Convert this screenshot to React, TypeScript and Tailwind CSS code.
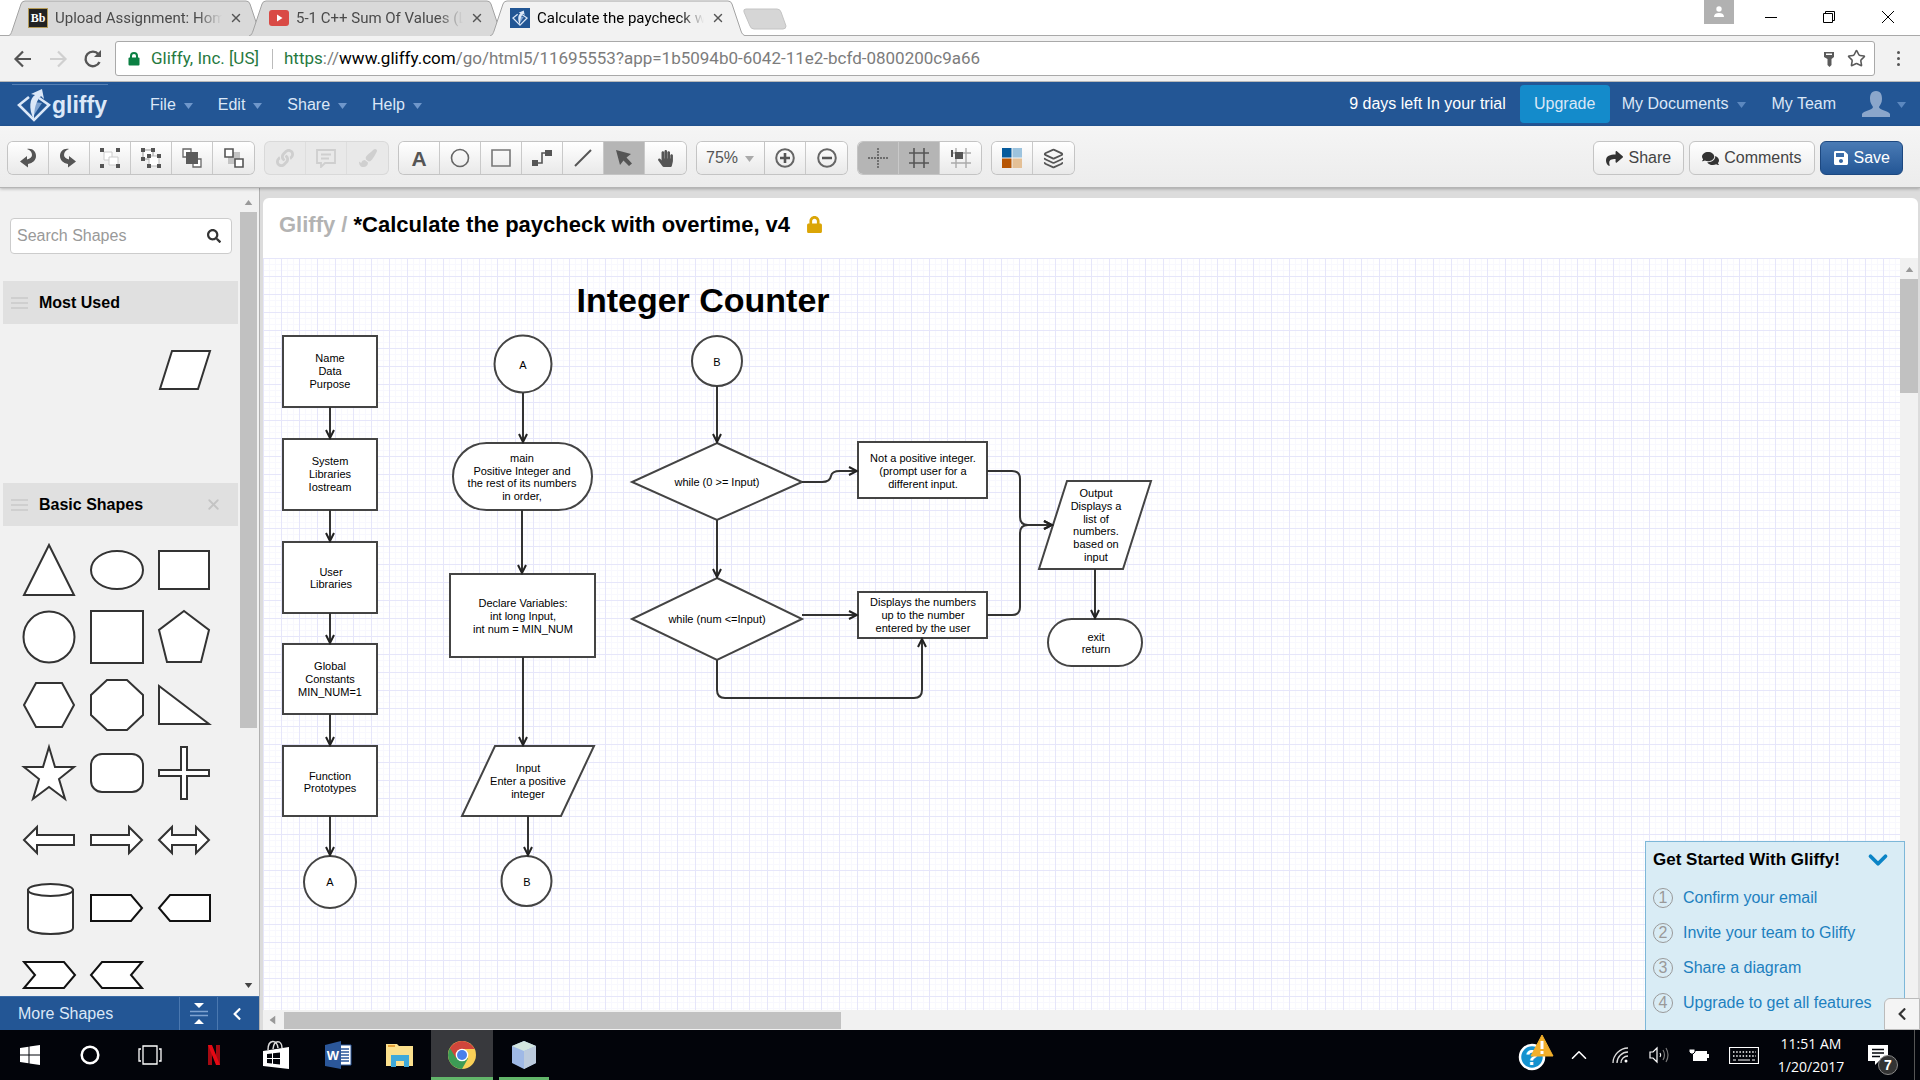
import type { ReactNode } from "react";
import {
  FaComments,
  FaHandPaper,
  FaLink,
  FaLock,
  FaPaintBrush,
  FaSave,
  FaSearch,
  FaShare,
  FaChevronLeft,
} from "react-icons/fa";
import { ChevronDown, ChevronUp, Layers, Star, X } from "lucide-react";

/* ---------- browser chrome ---------- */

function GliffyMark({ className }: { className: string }) {
  return (
    <svg viewBox="0 0 34 34" className={className} aria-hidden="true">
      <path d="M12 9 L2 17 L17 32 L32 17 L22 10" fill="none" stroke="#dce8f8" strokeWidth="2.6" />
      <path d="M17 14 L25 15 L17 27 Z" fill="#7fa3d1" />
      <path d="M17 32 C11 20 13 10 18 7 L14 6 L25 1 L27 11 L24 8 C19 13 17 20 17 32Z" fill="#dce8f8" />
    </svg>
  );
}

function Tab({ title, active, icon }: { title: string; active?: boolean; icon: ReactNode }) {
  return (
    <div className={active ? "relative z-10 h-9 w-64 -ml-[15px]" : "relative h-9 w-64 -ml-[15px]"}>
      <svg viewBox="0 0 256 36" className="absolute inset-0 h-full w-full" aria-hidden="true">
        <path
          d="M0 36 C3 35 3 33 4 31 L13 4 Q14 1 17 1 L238 1 Q241 1 242 4 L251 31 C252 34 253 35 256 36"
          fill={active ? "#f2f2f2" : "#d9d9d9"}
          stroke="#a3a3a3"
        />
      </svg>
      <div className="relative flex h-9 items-center gap-[7px] pl-5 pr-[21px]">
        <span className="h-5 w-5 shrink-0">{icon}</span>
        <span
          className={
            active
              ? "w-0 flex-1 overflow-hidden whitespace-nowrap text-[15px] text-black mask-r-from-85%"
              : "w-0 flex-1 overflow-hidden whitespace-nowrap text-[15px] text-[#4a4a4a] mask-r-from-85%"
          }
        >
          {title}
        </span>
        <button aria-label={`Close ${title}`} className="text-[#555]">
          <X size={14} strokeWidth={2.4} />
        </button>
      </div>
    </div>
  );
}

function BrowserBar() {
  return (
    <header className="shrink-0 font-[Roboto,sans-serif]">
      <div className="flex h-9 items-stretch border-b border-[#a9a9a9] bg-white pl-[23px]">
        <Tab
          title="Upload Assignment: Homework"
          icon={
            <span className="flex h-5 w-5 items-center justify-center border border-[#b49a55] bg-[#222] font-['Liberation_Serif',serif] text-xs font-bold text-white">
              Bb
            </span>
          }
        />
        <Tab
          title="5-1 C++ Sum Of Values (Loops)"
          icon={
            <svg viewBox="0 0 20 20" className="h-5 w-5" aria-hidden="true">
              <rect y="2" width="20" height="16" rx="3" fill="#d94a45" />
              <path d="M8 6.5 L13.5 10 L8 13.5Z" fill="#fff" />
            </svg>
          }
        />
        <Tab
          active
          title="Calculate the paycheck with overtime"
          icon={
            <span className="flex h-5 w-5 items-center justify-center bg-[#225694]">
              <GliffyMark className="h-4 w-4" />
            </span>
          }
        />
        <button aria-label="New tab" className="-ml-[3px] mt-2 h-[22px] w-[44px]">
          <svg viewBox="0 0 44 22" aria-hidden="true">
            <path d="M3 1 H34 Q37 1 38 4 L43 18 Q43 21 40 21 H11 Q8 21 7 18 L1 4 Q0 1 3 1Z" fill="#d6d6d6" stroke="#c4c4c4" />
          </svg>
        </button>
        <div className="ml-auto mr-[2px] flex items-start text-black">
          <button aria-label="Profile" className="flex h-6 w-[30px] items-center justify-center bg-[#b1b1b1]">
            <svg viewBox="0 0 12 12" className="h-3 w-3" aria-hidden="true" fill="#fff">
              <circle cx="6" cy="3" r="2.7" />
              <path d="M1 11 Q1 7 6 7 Q11 7 11 11Z" />
            </svg>
          </button>
          <button aria-label="Minimize" className="ml-2 flex h-[34px] w-[58px] items-center justify-center">
            <span className="block h-px w-3 bg-black" />
          </button>
          <button aria-label="Restore" className="flex h-[34px] w-[58px] items-center justify-center">
            <svg viewBox="0 0 12 12" className="h-3 w-3" fill="none" stroke="#000" aria-hidden="true">
              <path d="M.5 2.500 H9.500 V11.500 H.5Z M2.500 2.500 V.5 H11.500 V9.500 H9.500" />
            </svg>
          </button>
          <button aria-label="Close window" className="flex h-[34px] w-[60px] items-center justify-center">
            <svg viewBox="0 0 12 12" className="h-3 w-3" stroke="#000" aria-hidden="true">
              <path d="M0 0 L12 12 M12 0 L0 12" />
            </svg>
          </button>
        </div>
      </div>
      <div className="flex h-[46px] items-center border-b border-[#b9b9b9] bg-[#f2f2f2]">
        <button aria-label="Back" className="ml-[13px] w-[22px]">
          <svg viewBox="0 0 20 20" className="h-5 w-5" fill="none" stroke="#555" strokeWidth="2.2" aria-hidden="true">
            <path d="M18 10 H3 M10 2.500 L2.500 10 L10 17.500" />
          </svg>
        </button>
        <button aria-label="Forward" className="ml-[13px] w-[22px]">
          <svg viewBox="0 0 20 20" className="h-5 w-5" fill="none" stroke="#d0d0d0" strokeWidth="2.2" aria-hidden="true">
            <path d="M2 10 H17 M10 2.500 L17.500 10 L10 17.500" />
          </svg>
        </button>
        <button aria-label="Reload" className="ml-[13px] w-[22px]">
          <svg viewBox="0 0 20 20" className="h-5 w-5" fill="none" stroke="#555" strokeWidth="2.4" aria-hidden="true">
            <path d="M16.500 13 A7.300 7.300 0 1 1 15.500 5.300" />
            <path d="M18 1 V8 H11Z" fill="#555" stroke="none" />
          </svg>
        </button>
        <div className="ml-[10px] mr-[45px] flex h-[35px] flex-1 items-center rounded-[3px] border border-[#a9a9a9] bg-white pl-3 pr-2">
          <svg viewBox="0 0 12 14" className="h-[14px] w-3" aria-hidden="true">
            <path d="M3 6 V4 A3 3 0 0 1 9 4 V6" fill="none" stroke="#0b8043" strokeWidth="2" />
            <rect x="0.500" y="5.500" width="11" height="8" rx="1" fill="#0b8043" />
          </svg>
          <span className="ml-[11px] whitespace-nowrap text-[17px] text-[#26793f]">Gliffy, Inc. [US]</span>
          <span className="ml-[13px] h-5 w-px bg-[#bbb]" />
          <div role="textbox" aria-label="Address" className="ml-[11px] flex-1 whitespace-nowrap text-[17px] text-[#7c7c7c]">
            <span className="text-[#26793f]">https</span>://<span className="text-black">www.gliffy.com</span>
            /go/html5/11695553?app=1b5094b0-6042-11e2-bcfd-0800200c9a66
          </div>
          <button aria-label="Saved password" className="mr-3">
            <svg viewBox="0 0 12 16" className="h-4 w-3" fill="#5a5a5a" aria-hidden="true">
              <path d="M1 1 H11 V6 L8.500 8 V14 L6.500 16 L4.500 14 V8 L1 6Z M3 2.500 V4 H9 V2.500Z" fillRule="evenodd" />
            </svg>
          </button>
          <button aria-label="Bookmark" className="text-[#5a5a5a]">
            <Star size={19} strokeWidth={2} />
          </button>
        </div>
        <button aria-label="Browser menu" className="-ml-[28px] mr-4 flex w-3 flex-col items-center gap-[3px]">
          <span className="h-[3px] w-[3px] rounded-full bg-[#555]" />
          <span className="h-[3px] w-[3px] rounded-full bg-[#555]" />
          <span className="h-[3px] w-[3px] rounded-full bg-[#555]" />
        </button>
      </div>
    </header>
  );
}

/* ---------- application bars ---------- */

function Caret({ className }: { className: string }) {
  return (
    <svg viewBox="0 0 9 6" className={className} aria-hidden="true">
      <path d="M0 0 H9 L4.500 6Z" fill="currentColor" />
    </svg>
  );
}

function MenuBar() {
  return (
    <nav className="flex h-11 shrink-0 items-center bg-[#235695] text-base text-[#dbe7f7]">
      <a href="#home" aria-label="gliffy" className="ml-3 flex h-10 w-24 items-center border-t border-[#5580b5] pl-[5px]">
        <GliffyMark className="h-[34px] w-[34px]" />
        <span className="ml-px text-[23px] font-bold leading-7 text-[#dce8f8]">gliffy</span>
      </a>
      <div className="ml-[42px] flex gap-[25px] pt-[2px]">
        {["File", "Edit", "Share", "Help"].map((m) => (
          <button key={m} className="flex items-center gap-2">
            {m}
            <Caret className="mt-[2px] h-[6px] w-[9px] text-[#6f97cb]" />
          </button>
        ))}
      </div>
      <div className="ml-auto flex items-center">
        <span className="text-white">9 days left In your trial</span>
        <button className="ml-[14px] h-[38px] w-[90px] rounded bg-[#148bcb]">Upgrade</button>
        <button className="ml-3 flex items-center gap-[9px]">
          My Documents
          <Caret className="mt-[2px] h-[6px] w-[9px] text-[#5c88bf]" />
        </button>
        <a href="#team" className="ml-[25px]">
          My Team
        </a>
        <button aria-label="Account" className="ml-[26px] mr-[14px] flex items-center gap-[7px]">
          <svg viewBox="0 0 28 26" className="h-[26px] w-7" fill="#8ba6cb" aria-hidden="true">
            <path d="M14 0 C19 0 20 4 20 8 C20 12 18 14 17 16 C17 19 27 20 28 23 V26 H0 V23 C1 20 11 19 11 16 C10 14 8 12 8 8 C8 4 9 0 14 0Z" />
          </svg>
          <Caret className="mt-[2px] h-[6px] w-[9px] text-[#5c88bf]" />
        </button>
      </div>
    </nav>
  );
}

function Ico({ children }: { children: ReactNode }) {
  return (
    <svg viewBox="0 0 20 20" className="h-5 w-5" fill="none" aria-hidden="true">
      {children}
    </svg>
  );
}

type Tool = { label: string; icon: ReactNode; on?: boolean };

function ToolGroup({ tools, disabled, tail }: { tools: Tool[]; disabled?: boolean; tail?: boolean }) {
  return (
    <div
      className={
        disabled
          ? "flex h-8 divide-x divide-[#dedede] overflow-hidden rounded-[5px] bg-[#e9e9e9] text-[#cfcfcf] ring-1 ring-[#d9d9d9]"
          : tail
            ? "flex h-8 divide-x divide-[#c9c9c9] overflow-hidden rounded-r-[5px] bg-linear-to-b from-white to-[#e9e9e9] text-[#555] ring-1 ring-[#c4c4c4]"
            : "flex h-8 divide-x divide-[#c9c9c9] overflow-hidden rounded-[5px] bg-linear-to-b from-white to-[#e9e9e9] text-[#555] ring-1 ring-[#c4c4c4]"
      }
    >
      {tools.map((t) => (
        <button
          key={t.label}
          aria-label={t.label}
          disabled={disabled}
          className={
            t.on
              ? "flex w-[41px] items-center justify-center bg-[#b5b5b5]"
              : "flex w-[41px] items-center justify-center"
          }
        >
          {t.icon}
        </button>
      ))}
    </div>
  );
}

const arrangeTools: Tool[] = [
  {
    label: "Undo",
    icon: (
      <Ico>
        <path d="M9 1 C15 0 18 4 18 8 C18 12 15 15 10 16 V19.500 L2 13.500 L9 8 V11.500 C12 11 14 9 14 7 C14 4 12 2 9 1Z" fill="#555" />
      </Ico>
    ),
  },
  {
    label: "Redo",
    icon: (
      <Ico>
        <path d="M10 1 C4 0 1 4 1 8 C1 12 4 15 9 16 V19.500 L17 13.500 L10 8 V11.500 C7 11 5 9 5 7 C5 4 7 2 10 1Z" fill="#555" />
      </Ico>
    ),
  },
  {
    label: "Group",
    icon: (
      <Ico>
        <path d="M4 4 H12 V12 H4Z" fill="#fff" stroke="#ccc" />
        <path d="M9 9 H18 V17 H9Z" fill="#fff" stroke="#ccc" />
        <path d="M0 0 H4 V4 H0Z M16 0 H20 V4 H16Z M0 16 H4 V20 H0Z M16 16 H20 V20 H16Z" fill="#555" />
      </Ico>
    ),
  },
  {
    label: "Ungroup",
    icon: (
      <Ico>
        <path d="M2 2 H12 V11 H2Z" fill="#fff" stroke="#999" />
        <path d="M8 8 H18 V18 H8Z" fill="#fff" stroke="#bbb" />
        <path d="M0 0 H4 V4 H0Z M10 0 H14 V4 H10Z M0 9 H4 V13 H0Z M6 6 H10 V10 H6Z M16 6 H20 V10 H16Z M6 16 H10 V20 H6Z M16 16 H20 V20 H16Z" fill="#555" />
      </Ico>
    ),
  },
  {
    label: "Bring to front",
    icon: (
      <Ico>
        <path d="M1 1 H9 V9 H1Z M11 11 H19 V19 H11Z" fill="#fff" stroke="#666" strokeWidth="1.300" />
        <path d="M4 4 H16 V16 H4Z" fill="#5b5b5b" />
      </Ico>
    ),
  },
  {
    label: "Send to back",
    icon: (
      <Ico>
        <path d="M4 4 H16 V16 H4Z" fill="#c4c4c4" />
        <path d="M1 1 H9 V9 H1Z M11 11 H19 V19 H11Z" fill="#fff" stroke="#555" strokeWidth="1.600" />
      </Ico>
    ),
  },
];

const linkTools: Tool[] = [
  { label: "Link", icon: <FaLink size={18} /> },
  {
    label: "Note",
    icon: (
      <Ico>
        <path d="M1 2 H19 V15 H9 L5 19 V15 H1Z" stroke="#cfcfcf" strokeWidth="1.800" />
        <path d="M5 6.500 H15 M5 10.500 H13" stroke="#cfcfcf" strokeWidth="1.800" />
      </Ico>
    ),
  },
  { label: "Format painter", icon: <FaPaintBrush size={18} /> },
];

const drawTools: Tool[] = [
  { label: "Text", icon: <span className="text-[21px] font-bold leading-none">A</span> },
  {
    label: "Ellipse",
    icon: (
      <Ico>
        <circle cx="10" cy="10" r="8.500" stroke="#666" strokeWidth="1.600" />
      </Ico>
    ),
  },
  {
    label: "Rectangle",
    icon: (
      <Ico>
        <path d="M1 2 H19 V18 H1Z" stroke="#777" strokeWidth="1.600" />
      </Ico>
    ),
  },
  {
    label: "Connector",
    icon: (
      <Ico>
        <path d="M4 15 H10 V5 H16" stroke="#555" strokeWidth="1.600" />
        <path d="M0 12 H6 V18 H0Z M13 2 H20 V8 H13Z" fill="#555" />
      </Ico>
    ),
  },
  {
    label: "Line",
    icon: (
      <Ico>
        <path d="M2 18 L18 2" stroke="#555" strokeWidth="2" />
      </Ico>
    ),
  },
  {
    label: "Select",
    on: true,
    icon: (
      <Ico>
        <path d="M2 2 L17 6 L12.500 9.500 L18 15.500 L15 18 L9.500 12.500 L6 17Z" fill="#555" />
      </Ico>
    ),
  },
  { label: "Pan", icon: <FaHandPaper size={17} /> },
];

const zoomTools: Tool[] = [
  {
    label: "Zoom in",
    icon: (
      <Ico>
        <circle cx="10" cy="10" r="8.800" stroke="#666" strokeWidth="2" />
        <path d="M5 10 H15 M10 5 V15" stroke="#555" strokeWidth="2.600" />
      </Ico>
    ),
  },
  {
    label: "Zoom out",
    icon: (
      <Ico>
        <circle cx="10" cy="10" r="8.800" stroke="#666" strokeWidth="2" />
        <path d="M5 10 H15" stroke="#555" strokeWidth="2.600" />
      </Ico>
    ),
  },
];

const gridTools: Tool[] = [
  {
    label: "Drawing guides",
    on: true,
    icon: (
      <Ico>
        <path d="M0 10 H20 M10 0 V20" stroke="#555" strokeWidth="1.400" strokeDasharray="2 1" />
      </Ico>
    ),
  },
  {
    label: "Show grid",
    on: true,
    icon: (
      <Ico>
        <path d="M0 5 H20 M0 15 H20 M5 0 V20 M15 0 V20" stroke="#555" strokeWidth="1.600" />
      </Ico>
    ),
  },
  {
    label: "Snap to grid",
    icon: (
      <Ico>
        <path d="M0 5 H20 M0 15 H20 M5 0 V20 M15 0 V20" stroke="#aaa" strokeWidth="1.400" />
        <path d="M4 4 H12 V11 H4Z" fill="#555" />
        <path d="M1 2 V9" stroke="#555" strokeWidth="2" />
      </Ico>
    ),
  },
];

const styleTools: Tool[] = [
  {
    label: "Theme",
    icon: (
      <Ico>
        <path d="M0 0 H9.500 V9.500 H0Z" fill="#055a9c" />
        <path d="M10.500 0 H20 V9.500 H10.500Z" fill="#9cc3de" />
        <path d="M0 10.500 H9.500 V20 H0Z" fill="#b75605" />
        <path d="M10.500 10.500 H20 V20 H10.500Z" fill="#e4c096" />
      </Ico>
    ),
  },
  { label: "Layers", icon: <Layers size={21} strokeWidth={2} /> },
];

function Toolbar() {
  return (
    <div className="relative z-10 flex h-[62px] shrink-0 items-start border-b border-[#b5b5b5] bg-linear-to-b from-[#f5f5f5] to-[#ececec] px-2 pt-[15px] text-base shadow-[0_1px_3px_rgba(0,0,0,0.25)]">
      <div className="flex gap-[11px] pt-px">
        <ToolGroup tools={arrangeTools} />
        <ToolGroup tools={linkTools} disabled />
        <ToolGroup tools={drawTools} />
        <div className="flex gap-px">
          <div className="relative h-8 w-[67px] rounded-l-[5px] bg-linear-to-b from-white to-[#e9e9e9] ring-1 ring-[#c4c4c4]">
            <select aria-label="Zoom level" defaultValue="75%" className="h-full w-full appearance-none bg-transparent pl-[9px] text-[#555] outline-none">
              <option>75%</option>
              <option>100%</option>
            </select>
            <Caret className="pointer-events-none absolute right-[10px] top-[14px] h-[6px] w-[9px] text-[#aaa]" />
          </div>
          <ToolGroup tools={zoomTools} tail />
        </div>
        <ToolGroup tools={gridTools} />
        <ToolGroup tools={styleTools} />
      </div>
      <div className="ml-auto mr-[9px] flex gap-[5px] text-[#444]">
        <button className="flex h-[34px] items-center gap-[5px] rounded-md border border-[#c4c4c4] bg-linear-to-b from-white to-[#ececec] px-3">
          <FaShare size={17} className="text-[#333]" />
          Share
        </button>
        <button className="flex h-[34px] items-center gap-[5px] rounded-md border border-[#c4c4c4] bg-linear-to-b from-white to-[#ececec] px-3">
          <FaComments size={17} className="text-[#333]" />
          Comments
        </button>
        <button className="flex h-[34px] items-center gap-[5px] rounded-md border border-[#1d4880] bg-linear-to-b from-[#4a7bb5] to-[#235695] px-3 text-white">
          <FaSave size={16} />
          Save
        </button>
      </div>
    </div>
  );
}

/* ---------- shape library ---------- */

const shapes: { name: string; body: ReactNode; dark?: boolean }[] = [
  { name: "Triangle", body: <path d="M34 9 L59 59 H9Z" /> },
  { name: "Ellipse", body: <ellipse cx="34" cy="34" rx="26" ry="19" /> },
  { name: "Rectangle", body: <path d="M9 15 H59 V53 H9Z" /> },
  { name: "Circle", body: <circle cx="34" cy="34" r="25.500" /> },
  { name: "Square", body: <path d="M8 8 H60 V60 H8Z" /> },
  { name: "Pentagon", body: <path d="M34 8 L59 27 L51 59 H17 L9 27Z" /> },
  { name: "Hexagon", body: <path d="M9 34 L21 12 H47 L59 34 L47 56 H21Z" /> },
  { name: "Octagon", body: <path d="M24 9 H44 L60 24 V44 L44 59 H24 L8 44 V24Z" /> },
  { name: "Right triangle", body: <path d="M9 15 V53 H59Z" /> },
  { name: "Star", body: <path d="M34 8 L40 28 H59 L44 40 L50 60 L34 48 L18 60 L24 40 L9 28 H28Z" /> },
  { name: "Rounded rectangle", body: <rect x="8" y="15" width="52" height="38" rx="11" /> },
  { name: "Cross", body: <path d="M31 8 H37 V31 H59 V37 H37 V60 H31 V37 H9 V31 H31Z" /> },
  { name: "Left arrow", body: <path d="M9 34 L22 21 V29 H59 V39 H22 V47Z" /> },
  { name: "Right arrow", body: <path d="M59 34 L46 21 V29 H8 V39 H46 V47Z" /> },
  { name: "Double arrow", body: <path d="M9 34 L22 21 V29 H46 V21 L59 34 L46 47 V39 H22 V47Z" /> },
  {
    name: "Cylinder",
    body: (
      <>
        <path d="M13 15 V54 C13 62 58 62 58 54 V15" />
        <ellipse cx="35.500" cy="16" rx="22.500" ry="6" />
      </>
    ),
  },
  { name: "Tag right", dark: true, body: <path d="M8 21 H48 L59 34 L48 47 H8Z" /> },
  { name: "Tag left", dark: true, body: <path d="M60 21 H20 L9 34 L20 47 H60Z" /> },
  { name: "Chevron right", dark: true, body: <path d="M9 21 H49 L60 34 L49 47 H9 L20 34Z" /> },
  { name: "Chevron left", dark: true, body: <path d="M59 21 H19 L8 34 L19 47 H59 L48 34Z" /> },
];

function SectionTitle({ title, closable }: { title: string; closable?: boolean }) {
  return (
    <div className="ml-[3px] mr-[2px] flex h-[43px] shrink-0 items-center bg-[#e0e0e0] pl-2">
      <span className="flex w-[17px] flex-col gap-[3px]">
        <span className="h-[2px] bg-[#cfcfcf]" />
        <span className="h-[2px] bg-[#cfcfcf]" />
        <span className="h-[2px] bg-[#cfcfcf]" />
      </span>
      <h2 className="ml-[11px] text-base font-bold text-black">{title}</h2>
      {closable && (
        <button aria-label={`Remove ${title}`} className="ml-auto mr-4 text-[#c4c4c4]">
          <X size={17} strokeWidth={2.5} />
        </button>
      )}
    </div>
  );
}

function ShapeLibrary() {
  return (
    <aside className="flex w-[259px] shrink-0 flex-col bg-[#f1f1f1]">
      <div className="flex min-h-0 flex-1">
        <div className="flex w-60 flex-col overflow-hidden pt-[30px]">
          <div className="ml-[10px] mr-2 flex h-9 shrink-0 items-center rounded border border-[#ccc] bg-white pr-[10px]">
            <input aria-label="Search Shapes" placeholder="Search Shapes" className="w-0 flex-1 bg-transparent pl-[6px] text-base outline-none placeholder:text-[#999]" />
            <FaSearch size={14} className="text-[#333]" />
          </div>
          <div className="h-[27px] shrink-0" />
          <SectionTitle title="Most Used" />
          <div className="h-[159px] shrink-0 pl-[150px] pt-3">
            <button aria-label="Parallelogram" className="block h-[68px] w-[68px]">
              <svg viewBox="0 0 68 68" fill="#fff" stroke="#333" strokeWidth="2" aria-hidden="true">
                <path d="M22 15 H60 L48 53 H10Z" />
              </svg>
            </button>
          </div>
          <SectionTitle title="Basic Shapes" closable />
          <div className="ml-[15px] mt-[10px] grid h-[473px] w-[203px] shrink-0 grid-cols-3 grid-rows-7 place-items-center">
            {shapes.map((s) => (
              <button key={s.name} aria-label={s.name} className="block h-[68px] w-[68px]">
                <svg viewBox="0 0 68 68" fill="#fff" stroke={s.dark ? "#111" : "#333"} strokeWidth="2" aria-hidden="true">
                  {s.body}
                </svg>
              </button>
            ))}
          </div>
        </div>
        <div className="flex w-[17px] flex-col items-center bg-[#f1f1f1]">
          <Caret className="mt-3 h-[5px] w-[9px] shrink-0 rotate-180 text-[#999]" />
          <div className="mt-[7px] h-[516px] w-full bg-[#c1c1c1]" />
          <Caret className="mb-2 mt-auto h-[5px] w-[9px] text-[#444]" />
        </div>
      </div>
      <div className="flex h-[34px] shrink-0 divide-x divide-[#4a78b0] border-t border-[#3b6ba6] bg-[#235695] text-base text-[#dbe7f7]">
        <button className="flex-1 pl-[18px] text-left">More Shapes</button>
        <button aria-label="Collapse sections" className="flex w-[38px] items-center justify-center">
          <svg viewBox="0 0 18 22" className="h-[22px] w-[18px]" aria-hidden="true">
            <path d="M4 0 H14 L9 5Z M4 21 H14 L9 16Z" fill="#fff" />
            <path d="M0 8.500 H18 M0 12.500 H18" stroke="#7fa3d1" strokeWidth="1.500" />
          </svg>
        </button>
        <button aria-label="Hide library" className="flex w-[41px] items-center justify-center pr-1 text-white">
          <FaChevronLeft size={14} />
        </button>
      </div>
    </aside>
  );
}

/* ---------- diagram ---------- */

const labels: { x: number; y: number; lines: string[] }[] = [
  { x: 330, y: 371, lines: ["Name", "Data", "Purpose"] },
  { x: 330, y: 474, lines: ["System", "Libraries", "Iostream"] },
  { x: 331, y: 578, lines: ["User", "Libraries"] },
  { x: 330, y: 679, lines: ["Global", "Constants", "MIN_NUM=1"] },
  { x: 330, y: 782, lines: ["Function", "Prototypes"] },
  { x: 330, y: 882, lines: ["A"] },
  { x: 523, y: 365, lines: ["A"] },
  { x: 522, y: 477, lines: ["main", "Positive Integer and", "the rest of its numbers", "in order,"] },
  { x: 523, y: 616, lines: ["Declare Variables:", "int long Input,", "int num = MIN_NUM"] },
  { x: 528, y: 781, lines: ["Input", "Enter a positive", "integer"] },
  { x: 527, y: 882, lines: ["B"] },
  { x: 717, y: 362, lines: ["B"] },
  { x: 717, y: 482, lines: ["while (0 >= Input)"] },
  { x: 717, y: 619, lines: ["while (num <=Input)"] },
  { x: 923, y: 471, lines: ["Not a positive integer.", "(prompt user for a", "different input."] },
  { x: 923, y: 615, lines: ["Displays the numbers", "up to the number", "entered by the user"] },
  { x: 1096, y: 525, lines: ["Output", "Displays a", "list of", "numbers.", "based on", "input"] },
  { x: 1096, y: 643, lines: ["exit", "return"] },
];

const edges = [
  "M330 407 V438",
  "M330 510 V541",
  "M330 613 V643",
  "M330 714 V745",
  "M330 816 V855",
  "M523 393 V442",
  "M522 510 V573",
  "M523 657 V745",
  "M528 816 V855",
  "M717 386 V442",
  "M717 520 V577",
  "M802 482 H822 Q830 482 831 476 Q832 471 840 471 H857",
  "M802 615 H857",
  "M717 660 V690 Q717 698 725 698 H914 Q922 698 922 690 V639",
  "M987 471 H1012 Q1020 471 1020 479 V517 Q1020 525 1028 525 H1052",
  "M987 615 H1012 Q1020 615 1020 607 V533 Q1020 525 1028 525 H1052",
  "M1095 569 V618",
];

function Diagram() {
  return (
    <svg viewBox="263 258 1000 752" className="block h-[752px] w-[1000px]" role="img" aria-label="Integer Counter flowchart">
      <defs>
        <marker id="head" viewBox="0 0 12 12" refX="10" refY="6" markerWidth="12" markerHeight="12" markerUnits="userSpaceOnUse" orient="auto">
          <path d="M2 2 L10 6 L2 10" fill="none" stroke="#222" strokeWidth="2" />
        </marker>
      </defs>
      <g fill="#fff" stroke="#444" strokeWidth="2">
        <rect x="283" y="336" width="94" height="71" />
        <rect x="283" y="439" width="94" height="71" />
        <rect x="283" y="542" width="94" height="71" />
        <rect x="283" y="644" width="94" height="70" />
        <rect x="283" y="746" width="94" height="70" />
        <circle cx="330" cy="882" r="26" />
        <circle cx="523" cy="364" r="28.500" />
        <rect x="453" y="443" width="139" height="67" rx="33.500" />
        <rect x="450" y="574" width="145" height="83" />
        <path d="M495 746 H594 L561 816 H462Z" />
        <circle cx="526.500" cy="881" r="25" />
        <circle cx="717" cy="361" r="25" />
        <path d="M717 443 L802 482 L717 520 L632 482Z" />
        <path d="M717 578 L802 619 L717 660 L632 619Z" />
        <rect x="858" y="442" width="129" height="56" />
        <rect x="858" y="592" width="129" height="46" />
        <path d="M1067 481 H1151 L1123 569 H1039Z" />
        <rect x="1048" y="619" width="94" height="47" rx="23.500" />
      </g>
      <g fill="none" stroke="#333" strokeWidth="2">
        {edges.map((d) => (
          <path key={d} d={d} markerEnd="url(#head)" />
        ))}
      </g>
      <g fill="#000" textAnchor="middle" className="text-[11px]">
        {labels.map((l, n) => (
          <text key={n}>
            {l.lines.map((t, i) => (
              <tspan key={t} x={l.x} y={Math.round(l.y + 4 + (i - (l.lines.length - 1) / 2) * 12.7)}>
                {t}
              </tspan>
            ))}
          </text>
        ))}
        <text x="703" y="312" className="text-[34px] font-bold">
          Integer Counter
        </text>
      </g>
    </svg>
  );
}

const steps = ["Confirm your email", "Invite your team to Gliffy", "Share a diagram", "Upgrade to get all features"];

function GetStarted() {
  return (
    <section className="absolute bottom-0 right-[15px] h-[189px] w-[260px] border border-b-0 border-[#7db7d8] bg-[#d9ecf5] pl-[7px]">
      <div className="flex h-9 items-center">
        <h2 className="text-[17px] font-bold text-black">Get Started With Gliffy!</h2>
        <button aria-label="Collapse" className="ml-auto mr-[11px] text-[#0b84c6]">
          <ChevronDown size={30} strokeWidth={3} />
        </button>
      </div>
      <ol className="pt-[2px]">
        {steps.map((s, i) => (
          <li key={s} className="flex h-[35px] items-center">
            <span className="flex h-5 w-5 items-center justify-center rounded-full border border-[#999] text-base leading-none text-[#999]">{i + 1}</span>
            <a href="#step" className="ml-[10px] text-base text-[#1d80bf]">
              {s}
            </a>
          </li>
        ))}
      </ol>
    </section>
  );
}

function Workspace() {
  return (
    <main className="relative flex min-w-0 flex-1 flex-col border-l border-[#b0b0b0] bg-[#dcdcdc] pl-[3px] pr-[2px] pt-[10px]">
      <h1 className="flex h-[60px] shrink-0 items-center rounded-t-md bg-white pb-2 pl-4 text-[22px] font-bold text-black">
        <span className="whitespace-pre text-[#b3b3b3]">Gliffy / </span>
        *Calculate the paycheck with overtime, v4
        <FaLock size={17} className="ml-4 text-[#dba506]" />
      </h1>
      <div className="flex min-h-0 flex-1">
        <div className="flex min-w-0 flex-1 flex-col">
          <div className="min-h-0 flex-1 overflow-hidden bg-white bg-[linear-gradient(#e6e6fa_1px,transparent_1px),linear-gradient(90deg,#e6e6fa_1px,transparent_1px),linear-gradient(#f8f8fe_1px,transparent_1px),linear-gradient(90deg,#f8f8fe_1px,transparent_1px)] bg-[size:18px_18px,18px_18px,6px_6px,6px_6px]">
            <Diagram />
          </div>
          <div className="flex h-5 shrink-0 items-center bg-[#f1f1f1]">
            <Caret className="ml-[5px] h-[6px] w-[9px] rotate-90 text-[#999]" />
            <div className="ml-[7px] h-[17px] w-[34%] bg-[#c1c1c1]" />
          </div>
        </div>
        <div className="flex w-[18px] shrink-0 flex-col items-center bg-[#f1f1f1]">
          <Caret className="mt-[9px] h-[5px] w-[9px] shrink-0 rotate-180 text-[#999]" />
          <div className="mt-[7px] h-[114px] w-full bg-[#c1c1c1]" />
        </div>
      </div>
      <GetStarted />
      <button aria-label="Show panel" className="absolute bottom-0 right-0 flex h-8 w-9 items-center justify-center rounded-tl-md border border-[#bbb] bg-[#f4f4f4] text-[#333]">
        <FaChevronLeft size={14} />
      </button>
    </main>
  );
}

/* ---------- desktop task bar ---------- */

function Task({ label, children, wide, active, open }: { label: string; children: ReactNode; wide?: boolean; active?: boolean; open?: boolean }) {
  return (
    <button
      aria-label={label}
      className={
        active
          ? "relative flex w-[62px] items-center justify-center bg-[#38393d]"
          : wide
            ? "relative flex w-[62px] items-center justify-center"
            : "relative flex w-[60px] items-center justify-center"
      }
    >
      {children}
      {active && <span className="absolute inset-x-0 bottom-0 h-[3px] bg-[#62b56a]" />}
      {open && <span className="absolute inset-x-[6px] bottom-0 h-[3px] bg-[#62b56a]" />}
    </button>
  );
}

function TaskBar() {
  return (
    <footer className="flex h-[50px] shrink-0 bg-[#02040a] text-white">
      <Task label="Start">
        <svg viewBox="0 0 20 20" className="h-5 w-5" fill="#fff" aria-hidden="true">
          <path d="M0 3 L8.500 1.700 V9.500 H0Z M9.500 1.500 L20 0 V9.500 H9.500Z M0 10.500 H8.500 V18.300 L0 17Z M9.500 10.500 H20 V20 L9.500 18.500Z" />
        </svg>
      </Task>
      <Task label="Cortana">
        <svg viewBox="0 0 20 20" className="h-5 w-5" aria-hidden="true">
          <circle cx="10" cy="10" r="8.300" fill="none" stroke="#fff" strokeWidth="2.500" />
        </svg>
      </Task>
      <Task label="Task view">
        <svg viewBox="0 0 24 20" className="h-5 w-6" fill="none" stroke="#fff" strokeWidth="1.300" aria-hidden="true">
          <path d="M5 1 H19 V19 H5Z M3 4 H1 V16 H3 M21 4 H23 V16 H21" />
        </svg>
      </Task>
      <div className="ml-[3px] flex">
        <Task label="Netflix" wide>
          <svg viewBox="0 0 12 20" className="h-5 w-3" aria-hidden="true">
            <path d="M0 0 H4 V20 L0 20Z M8 0 H12 V20 H8Z" fill="#a50a12" />
            <path d="M0 0 H4 L12 20 H8Z" fill="#e50914" />
          </svg>
        </Task>
        <Task label="Store" wide>
          <svg viewBox="0 0 28 30" className="h-[30px] w-7" aria-hidden="true">
            <path d="M6 10 C6 -1 15 -1 16 8 M11 9 C12 -1 20 0 20 8" fill="none" stroke="#ddd" strokeWidth="1.500" />
            <path d="M1 11 L27 7 V29 L1 26Z" fill="#fff" />
            <path d="M5 14 L10 13.500 V18 H5Z M11 13.300 L18 12.500 V18 H11Z M5 19 H10 V23.500 L5 23Z M11 19 H18 V24.500 L11 23.700Z" fill="#02040a" />
          </svg>
        </Task>
        <Task label="Word" wide>
          <svg viewBox="0 0 28 28" className="h-7 w-7" aria-hidden="true">
            <path d="M14 4 H27 V24 H14Z" fill="#fff" stroke="#2b579a" />
            <path d="M16 8 H25 M16 11 H25 M16 14 H25 M16 17 H25 M16 20 H25" stroke="#2b579a" strokeWidth="1.500" />
            <path d="M1 4 L17 0 V28 L1 25Z" fill="#2b579a" />
            <text x="9" y="19" textAnchor="middle" fill="#fff" className="text-[13px] font-bold">
              W
            </text>
          </svg>
        </Task>
        <Task label="File Explorer" wide>
          <svg viewBox="0 0 28 24" className="h-6 w-7" aria-hidden="true">
            <path d="M0 1 H11 L13 3 H27 V23 H0Z" fill="#fbe08d" />
            <path d="M2 2 H9 V4 H2Z" fill="#e8a33a" />
            <path d="M5 12 H23 V24 H18 V18 H10 V24 H5Z" fill="#3fa9d9" />
          </svg>
        </Task>
        <Task label="Chrome" active>
          <svg viewBox="0 0 28 28" className="h-7 w-7" aria-hidden="true">
            <circle cx="14" cy="14" r="14" fill="#f9d057" />
            <path d="M14 14 L1.900 7 A14 14 0 0 0 14 28 L20 17.500Z" fill="#3d9b55" />
            <path d="M1.900 7 A14 14 0 0 1 26.100 7 L26.600 8 H14 L8 17Z" fill="#d0463b" />
            <circle cx="14" cy="14" r="6.300" fill="#fff" />
            <circle cx="14" cy="14" r="5" fill="#4a80ea" />
          </svg>
        </Task>
        <Task label="NetBeans" wide open>
          <svg viewBox="0 0 26 28" className="h-7 w-[26px]" aria-hidden="true">
            <path d="M13 0 L25 5 V22 L13 28 L1 22 V5Z" fill="#9fb9e6" />
            <path d="M13 0 L25 5 L13 10 L1 5Z" fill="#d3e6df" />
            <path d="M13 10 L25 5 V22 L13 28Z" fill="#bccbdd" />
          </svg>
        </Task>
      </div>
      <div className="ml-auto flex items-center">
        <button aria-label="Get help" className="-mt-[5px] mr-[2px] flex w-10 justify-center">
          <svg viewBox="0 0 36 36" className="h-9 w-9" aria-hidden="true">
            <circle cx="14" cy="22" r="12" fill="#1592cf" stroke="#fff" strokeWidth="2.500" />
            <text x="14" y="30" textAnchor="middle" fill="#fff" className="text-[22px] font-bold">
              ?
            </text>
            <path d="M24 0 L35 21 H13Z" fill="#f2af2b" stroke="#f2af2b" strokeLinejoin="round" />
            <path d="M24 6 V14 M24 16 V19" stroke="#fff" strokeWidth="3" />
          </svg>
        </button>
        <button aria-label="Show hidden icons" className="flex w-[42px] justify-center">
          <ChevronUp size={26} strokeWidth={1.5} />
        </button>
        <button aria-label="Network" className="flex w-10 justify-center">
          <svg viewBox="0 0 16 16" className="h-4 w-4" fill="none" stroke="#ddd" strokeWidth="1.300" aria-hidden="true">
            <path d="M1 16 C1 8 8 1 16 1 M5 16 C5 10 10 5 16 5 M9 16 C9 12 12 9 16 9" />
            <circle cx="14" cy="14" r="1.500" fill="#fff" stroke="none" />
          </svg>
        </button>
        <button aria-label="Volume" className="flex w-[38px] justify-center">
          <svg viewBox="0 0 20 18" className="h-[18px] w-5" fill="none" stroke="#fff" strokeWidth="1.200" aria-hidden="true">
            <path d="M1 6 H4 L8 2 V16 L4 12 H1Z M11 7 Q12.500 9 11 11" />
            <path d="M14 4 Q17 9 14 14 M17 2 Q21 9 17 16" stroke="#777" />
          </svg>
        </button>
        <button aria-label="Battery" className="flex w-[42px] justify-center">
          <svg viewBox="0 0 20 14" className="h-[14px] w-5" aria-hidden="true">
            <path d="M4 3 H18 V6 H20 V10 H18 V13 H4Z" fill="#fff" />
            <path d="M0 1 H6 V4 L4 6 H2 L0 4Z" fill="#fff" stroke="#02040a" />
          </svg>
        </button>
        <button aria-label="Touch keyboard" className="flex w-12 justify-center">
          <svg viewBox="0 0 30 17" className="h-[17px] w-[30px]" fill="none" stroke="#fff" aria-hidden="true">
            <path d="M.5 .5 H29.500 V16.500 H.5Z" strokeWidth="1.200" />
            <path d="M4 5 H27 M4 9 H27" strokeWidth="1.500" strokeDasharray="1.500 1.700" />
            <path d="M4 13 H7 M9 13 H21 M23 13 H26" />
          </svg>
        </button>
        <div className="w-[86px] text-center font-['Open_Sans',sans-serif] text-[14px] leading-[23px]">
          <div>11:51 AM</div>
          <div>1/20/2017</div>
        </div>
        <button aria-label="Action center, 7 notifications" className="relative flex w-[60px] justify-center pr-3">
          <svg viewBox="0 0 20 20" className="h-5 w-5" aria-hidden="true">
            <path d="M0 0 H20 V16 H11 L7 20 V16 H0Z" fill="#fff" />
            <path d="M4 4.500 H16 M4 8 H16 M4 11.500 H12" stroke="#02040a" strokeWidth="1.300" />
          </svg>
          <span className="absolute -bottom-[10px] right-4 flex h-5 w-5 items-center justify-center rounded-full border border-[#888] bg-[#333] text-sm font-bold leading-none">
            7
          </span>
        </button>
        <span className="h-full w-[6px] border-l border-[#555]" />
      </div>
    </footer>
  );
}

export default function App() {
  return (
    <div className="flex h-screen flex-col overflow-hidden bg-white font-['Liberation_Sans',Arial,sans-serif]">
      <BrowserBar />
      <MenuBar />
      <Toolbar />
      <div className="flex min-h-0 flex-1">
        <ShapeLibrary />
        <Workspace />
      </div>
      <TaskBar />
    </div>
  );
}
